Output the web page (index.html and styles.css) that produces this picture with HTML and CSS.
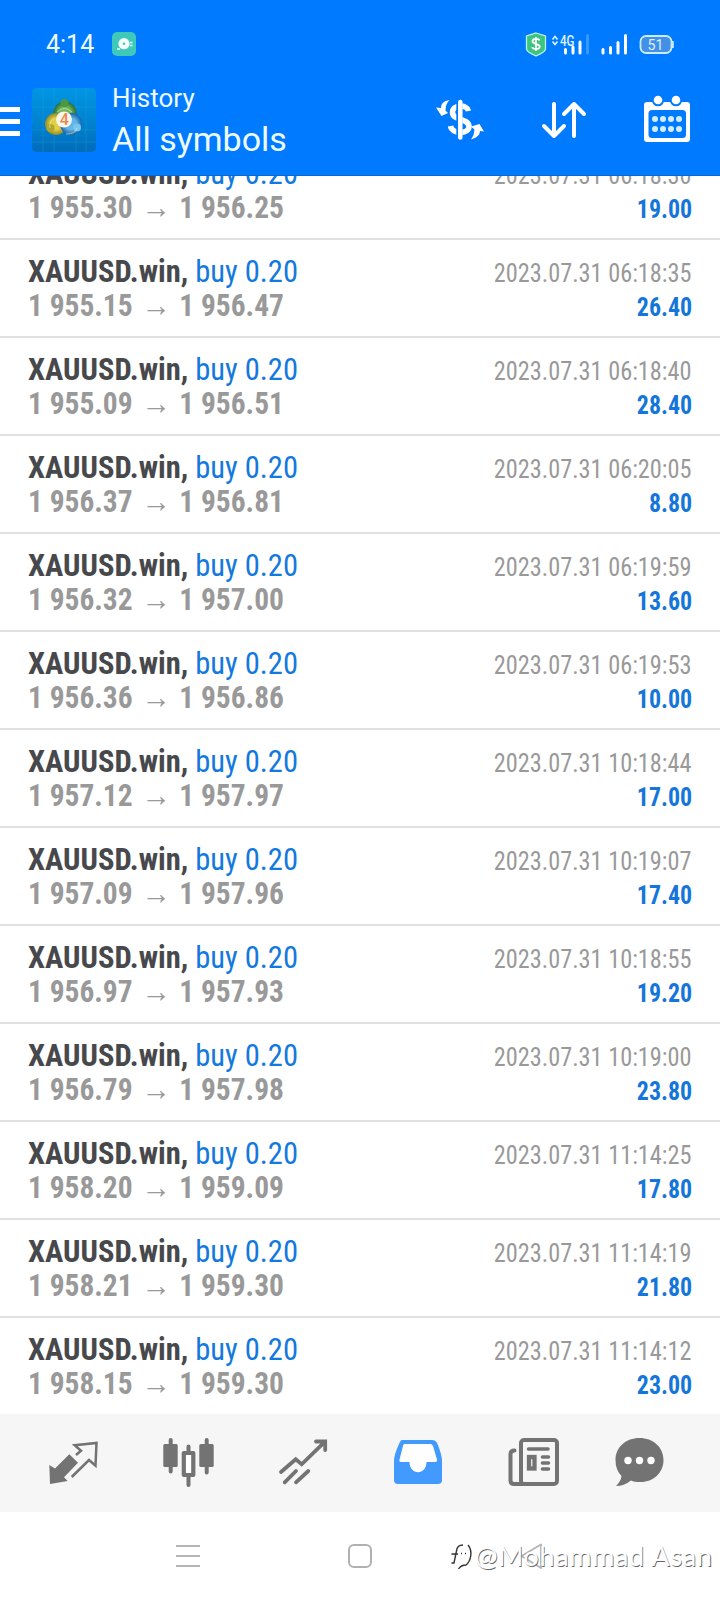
FILE: index.html
```html
<!DOCTYPE html>
<html lang="en">
<head>
<meta charset="utf-8">
<title>History</title>
<link rel="stylesheet" href="styles.css">
</head>
<body>
<div class="phone">
  <header class="header">
    <div class="status">
      <span class="clock">4:14</span>
      <svg class="app-badge" width="24" height="24" viewBox="0 0 24 24"><rect width="24" height="24" rx="5" fill="#40c8b8"/><circle cx="12" cy="11.700" r="5.600" fill="#f4fffd"/><circle cx="12" cy="11.700" r="1.200" fill="#40c8b8"/><path d="M5 17h3M18 10.500h2.500M18 13.500h2.500" stroke="#d8fff8" stroke-width="1.500"/></svg>
      <svg class="status-icons" width="150" height="26" viewBox="0 0 150 26">
        <path d="M11 1L20.500 4V17Q20.500 20 11 24Q1.500 20 1.500 17V4Z" fill="#3ec481" stroke="#bdf5e4" stroke-width="1.300"/>
        <path d="M14.500 8.500C14 6.500 7.500 6 7.500 9.300C7.500 12.600 14.700 11 14.700 14.700C14.700 18 7.500 17.500 7.300 15M11 5V19" fill="none" stroke="#fff" stroke-width="1.800"/>
        <path d="M27.500 7.500L30 4.500L32.500 7.500M27.500 9.500L30 12.500L32.500 9.500" fill="none" stroke="#e0f4ff" stroke-width="1.600"/>
        <text class="net" x="35" y="13.500" textLength="14.500" lengthAdjust="spacingAndGlyphs">4G</text>
        <path d="M40.500 17.500V21M48 15V21M55 10V21" stroke="#fff" stroke-width="3" stroke-linecap="round"/>
        <path d="M62.500 3.500V21" stroke="#3798ff" stroke-width="3" stroke-linecap="round"/>
        <path d="M78 17.500V21M85.500 15.500V21M93 10.500V21M100.500 3.500V21" stroke="#fff" stroke-width="3" stroke-linecap="round"/>
        <rect x="115.500" y="4" width="31" height="17" rx="5.500" fill="#4390e6" stroke="#c8ecff" stroke-width="1.800"/>
        <path d="M147.800 9V16" stroke="#c8ecff" stroke-width="2"/>
        <text class="battery" x="122.500" y="17.700" textLength="16" lengthAdjust="spacingAndGlyphs">51</text>
      </svg>
    </div>
    <div class="toolbar">
      <svg class="burger" width="20" height="30" viewBox="0 0 20 30"><path d="M0 3.500H20M0 15.500H20M0 27.500H20" stroke="#fff" stroke-width="5"/></svg>
      <svg class="logo" width="64" height="64" viewBox="0 0 64 64">
        <defs>
          <linearGradient id="sky" x1="0" y1="0" x2="0" y2="1"><stop offset="0" stop-color="#0096e4"/><stop offset=".6" stop-color="#0080cd"/><stop offset="1" stop-color="#006bb9"/></linearGradient>
          <radialGradient id="green"><stop offset=".5" stop-color="#73b75d"/><stop offset="1" stop-color="#246f37"/></radialGradient>
          <radialGradient id="gold"><stop offset=".5" stop-color="#e0cf45"/><stop offset="1" stop-color="#8e8a28"/></radialGradient>
          <radialGradient id="blue"><stop offset=".5" stop-color="#62b5e7"/><stop offset="1" stop-color="#1763ad"/></radialGradient>
        </defs>
        <rect width="64" height="64" rx="5" fill="url(#sky)"/>
        <path d="M0 19H64M0 42H64M0 54H64M11 0V64M22 0V64M44 0V64M54 0V64" stroke="#38b4e5" stroke-width=".7" opacity=".35"/>
        <circle cx="33" cy="25" r="11.500" fill="url(#green)"/><circle cx="24" cy="36" r="11" fill="url(#gold)"/><circle cx="39" cy="36" r="11" fill="url(#blue)"/>
        <circle cx="32.500" cy="15" r="4" fill="#4b9945"/><circle cx="18.500" cy="40" r="4" fill="#b3a62c"/><circle cx="45" cy="39.500" r="4" fill="#78c5ee"/>
        <path d="M25 24Q32 17 40 24M18 40Q17 32 23 30M45 40Q44 46 34 46" fill="none" stroke="#eaf2a6" stroke-width="1" opacity=".6"/>
        <circle cx="32" cy="31.500" r="8" fill="#faf6ec"/>
        <text class="four" x="32.300" y="37" text-anchor="middle">4</text>
      </svg>
      <div class="titles"><div class="subtitle">History</div><div class="title">All symbols</div></div>
      <svg class="tools" width="256" height="50" viewBox="0 0 256 50">
        <g fill="none" stroke="#fff">
          <path d="M32.500 15C31 8.500 16.500 8 16.500 16.500C16.500 25 33 21.500 33 30.500C33 38.500 16 38.500 14.500 30" stroke-width="5.500"/>
          <path d="M23.300 2V46" stroke="#007aff" stroke-width="6"/>
          <path d="M24.300 6V41.500" stroke-width="4.500" stroke-linecap="round"/>
        </g>
        <path d="M13.500 4Q4.500 5.500 5 12L0 11.500L5.500 20L12 17L9.500 14.500Q9.500 8 13.500 4ZM35 43.500Q44 41 44 35L48 35.500L43.500 28L35 30.500L38.500 33.500Q38.500 38.500 35 43.500Z" fill="#fff"/>
        <path d="M118 8V40M108 30L118 40L128 30M138 40V8M128 18L138 8L148 18" fill="none" stroke="#fff" stroke-width="4" stroke-linecap="round" stroke-linejoin="round"/>
        <rect x="208" y="6" width="46" height="40" rx="3" fill="#fff"/>
        <rect x="212.500" y="14" width="37.500" height="28" rx="3.500" fill="#007aff"/>
        <g fill="#fff" stroke="#007aff" stroke-width="2"><circle cx="222" cy="4" r="5.300"/><circle cx="240" cy="4" r="5.300"/></g>
        <path d="M219 23h.01M227 23h.01M235 23h.01M243 23h.01M219 33h.01M227 33h.01M235 33h.01M243 33h.01" stroke="#d3edff" stroke-width="6" stroke-linecap="round"/>
      </svg>
    </div>
  </header>

  <main class="list">
    <div class="row"><div class="deal"><div class="name"><b>XAUUSD.win,</b> buy 0.20</div><div class="prices">1 955.30 <i>→</i> 1 956.25</div></div><div class="side"><div class="date">2023.07.31 06:18:30</div><div class="profit">19.00</div></div></div>
    <div class="row"><div class="deal"><div class="name"><b>XAUUSD.win,</b> buy 0.20</div><div class="prices">1 955.15 <i>→</i> 1 956.47</div></div><div class="side"><div class="date">2023.07.31 06:18:35</div><div class="profit">26.40</div></div></div>
    <div class="row"><div class="deal"><div class="name"><b>XAUUSD.win,</b> buy 0.20</div><div class="prices">1 955.09 <i>→</i> 1 956.51</div></div><div class="side"><div class="date">2023.07.31 06:18:40</div><div class="profit">28.40</div></div></div>
    <div class="row"><div class="deal"><div class="name"><b>XAUUSD.win,</b> buy 0.20</div><div class="prices">1 956.37 <i>→</i> 1 956.81</div></div><div class="side"><div class="date">2023.07.31 06:20:05</div><div class="profit">8.80</div></div></div>
    <div class="row"><div class="deal"><div class="name"><b>XAUUSD.win,</b> buy 0.20</div><div class="prices">1 956.32 <i>→</i> 1 957.00</div></div><div class="side"><div class="date">2023.07.31 06:19:59</div><div class="profit">13.60</div></div></div>
    <div class="row"><div class="deal"><div class="name"><b>XAUUSD.win,</b> buy 0.20</div><div class="prices">1 956.36 <i>→</i> 1 956.86</div></div><div class="side"><div class="date">2023.07.31 06:19:53</div><div class="profit">10.00</div></div></div>
    <div class="row"><div class="deal"><div class="name"><b>XAUUSD.win,</b> buy 0.20</div><div class="prices">1 957.12 <i>→</i> 1 957.97</div></div><div class="side"><div class="date">2023.07.31 10:18:44</div><div class="profit">17.00</div></div></div>
    <div class="row"><div class="deal"><div class="name"><b>XAUUSD.win,</b> buy 0.20</div><div class="prices">1 957.09 <i>→</i> 1 957.96</div></div><div class="side"><div class="date">2023.07.31 10:19:07</div><div class="profit">17.40</div></div></div>
    <div class="row"><div class="deal"><div class="name"><b>XAUUSD.win,</b> buy 0.20</div><div class="prices">1 956.97 <i>→</i> 1 957.93</div></div><div class="side"><div class="date">2023.07.31 10:18:55</div><div class="profit">19.20</div></div></div>
    <div class="row"><div class="deal"><div class="name"><b>XAUUSD.win,</b> buy 0.20</div><div class="prices">1 956.79 <i>→</i> 1 957.98</div></div><div class="side"><div class="date">2023.07.31 10:19:00</div><div class="profit">23.80</div></div></div>
    <div class="row"><div class="deal"><div class="name"><b>XAUUSD.win,</b> buy 0.20</div><div class="prices">1 958.20 <i>→</i> 1 959.09</div></div><div class="side"><div class="date">2023.07.31 11:14:25</div><div class="profit">17.80</div></div></div>
    <div class="row"><div class="deal"><div class="name"><b>XAUUSD.win,</b> buy 0.20</div><div class="prices">1 958.21 <i>→</i> 1 959.30</div></div><div class="side"><div class="date">2023.07.31 11:14:19</div><div class="profit">21.80</div></div></div>
    <div class="row"><div class="deal"><div class="name"><b>XAUUSD.win,</b> buy 0.20</div><div class="prices">1 958.15 <i>→</i> 1 959.30</div></div><div class="side"><div class="date">2023.07.31 11:14:12</div><div class="profit">23.00</div></div></div>
  </main>

  <nav class="tabs">
    <svg width="52" height="52" viewBox="0 0 52 52"><path d="M1.300 27L7 30.500L21.300 16.300L30 24.700L16 39.300L19.700 43L2 46Z" fill="#737373"/><path d="M28 17L33 12.700L26.700 7.300L48.500 4.900L47.500 27.700L41 22L23.700 39" fill="none" stroke="#737373" stroke-width="2.500"/></svg>
    <svg width="52" height="52" viewBox="0 0 52 52"><path d="M8.700 2V33.500M44.700 2V34.500M26.500 8.500V15M26.500 38V47" fill="none" stroke="#737373" stroke-width="4" stroke-linecap="round"/><rect x="1.300" y="6" width="14.400" height="23" rx="1.500" fill="#737373"/><rect x="37.300" y="6" width="14.400" height="23" rx="1.500" fill="#737373"/><rect x="21.800" y="15" width="9.500" height="22" fill="#fff" stroke="#737373" stroke-width="4.200" stroke-linejoin="round"/></svg>
    <svg class="trade" width="52" height="52" viewBox="0 0 52 52"><path d="M3 34L17.700 21.300L23.700 26.300L47 3.700M38 3.500H47.200V12M6.700 44.300L18 33M18 44.300L30.300 33" fill="none" stroke="#737373" stroke-width="3.800" stroke-linecap="round"/></svg>
    <svg width="52" height="52" viewBox="0 0 52 52"><path d="M10 2H40Q44 2 45.500 6Q50 17 50 23V42Q50 46 46 46H6Q2 46 2 42V23Q2 17 7 6Q8.500 2 10 2Z" fill="#429aff"/><path d="M12.500 6H38.500Q40 6 41 8L45 21.500Q45.500 24 43 24H34.500C34.500 37.500 17.500 37.500 17.500 24H9Q7 24 7.500 21.500L11 8Q11.500 6 12.500 6Z" fill="#fff"/></svg>
    <svg class="news" width="52" height="52" viewBox="0 0 52 52"><g fill="none" stroke="#737373" stroke-linecap="round"><rect x="13" y="2" width="36" height="44" rx="3" stroke-width="4"/><path d="M6.500 12.500Q2.500 12.500 2.500 16V42.500Q2.500 46 6.500 46H15" stroke-width="4"/><path d="M20.500 11H40M34.500 19H40.500M34.500 25H40.500M34.500 31H40.500" stroke-width="3.600"/><rect x="21" y="19" width="5.500" height="11.500" stroke-width="4.300"/></g></svg>
    <svg class="chat" width="52" height="52" viewBox="0 0 52 52"><path d="M25.500 0C39 0 49.500 9 49.500 22S39 44 27 44Q20 44 17 42.500Q10 48 2 48Q7 43 7.500 38Q1.500 32 1.500 22C1.500 9 12 0 25.500 0Z" fill="#737373"/><g fill="#fff"><circle cx="14" cy="22.500" r="3.700"/><circle cx="25.500" cy="22.500" r="3.700"/><circle cx="37" cy="22.500" r="3.700"/></g></svg>
  </nav>

  <footer class="system">
    <svg width="24" height="26" viewBox="0 0 24 26"><path d="M0 3H24M0 13H24M0 23H24" stroke="#b5b5b5" stroke-width="2"/></svg>
    <svg width="24" height="26" viewBox="0 0 24 26"><rect x="1" y="2" width="22" height="22" rx="5" fill="none" stroke="#b0b0b0" stroke-width="2"/></svg>
    <svg width="24" height="26" viewBox="0 0 24 26"><path d="M21 1.500V25L1.500 13Z" fill="none" stroke="#b5b5b5" stroke-width="2" stroke-linejoin="round"/></svg>
    <div class="credit">
      <svg width="26" height="30" viewBox="0 0 26 30"><path d="M14 4Q8 4 7.500 10L5 22L2.500 22M2.500 13H9M19 4C24 10 22 20 17 24Q12 24 9.500 28M12 12.500h1M16 12.500h1" fill="none" stroke="#333" stroke-width="1.400"/></svg>
      <span class="handle">@Mohammad Asan</span>
    </div>
  </footer>
</div>
</body>
</html>
```
FILE: styles.css
```css
* { box-sizing: border-box; }
body { margin: 0; background: #fff; font-family: Roboto, "Liberation Sans", sans-serif; }
svg { display: block; flex: none; overflow: visible; }
.phone { width: 720px; height: 1600px; display: flex; flex-direction: column; overflow: hidden; }

.header { height: 176px; flex: none; background: #007aff; border-bottom: 1px solid #0a68cf; color: #eefbff; }
.status { height: 88px; padding: 32px 45px 0 46px; display: flex; align-items: flex-start; }
.clock { width: 66px; font-size: 25px; line-height: 25px; }
.status-icons { margin-left: auto; }
.net { font-size: 14px; font-weight: 500; fill: #e0f4ff; }
.battery { font-size: 15.5px; fill: #d8f1ff; }
.toolbar { display: flex; align-items: flex-start; padding-right: 28px; }
.burger { margin-top: 18px; margin-right: 12px; }
.four { font-size: 16px; font-weight: 500; fill: #e98a4c; }
.titles { margin-left: 16px; white-space: nowrap; }
.subtitle { font-size: 26px; line-height: 30px; margin-top: -5px; }
.title { font-size: 34px; line-height: 40px; margin-top: 6px; }
.tools { margin-left: auto; margin-top: 8px; }

.list { height: 1238px; flex: none; display: flex; flex-direction: column; justify-content: flex-end; overflow: hidden; }
.row { height: 98px; flex: none; display: flex; justify-content: space-between; padding: 14px 28px 0; border-bottom: 2px solid #e0e0e0; line-height: 34px; white-space: nowrap; font-family: "Roboto Condensed", Roboto, sans-serif; font-stretch: 75%; }
.row:last-child { height: 96px; border-bottom: 0; }
.name { font-size: 32px; color: #1479de; transform: scaleX(.954); transform-origin: left; }
.name b { color: #47484c; }
.prices { font-size: 32px; font-weight: 700; color: #999; transform: scaleX(.92); transform-origin: left; }
.prices i { font-style: normal; margin: 0 2px; }
.side { padding-top: 2px; text-align: right; }
.date { font-size: 26px; color: #999; transform: scaleX(.935); transform-origin: right; }
.profit { font-size: 26px; font-weight: 700; color: #1476da; transform: translateX(.6px) scaleX(.92); transform-origin: right; }

.tabs { height: 98px; flex: none; background: #f6f6f6; display: flex; gap: 62px; padding: 24px 0 0 48px; }
.trade { margin-left: 2px; }
.news { margin-left: 2px; }
.chat { margin-left: -8px; }
.system { position: relative; height: 88px; flex: none; display: flex; gap: 148px; padding: 31px 0 0 176px; }
.credit { position: absolute; left: 449px; top: 29px; display: flex; }
.handle { font: 400 27px/30px Lato, sans-serif; letter-spacing: .65px; color: #fff; text-shadow: .8px .8px 0 #666; white-space: nowrap; }
```
